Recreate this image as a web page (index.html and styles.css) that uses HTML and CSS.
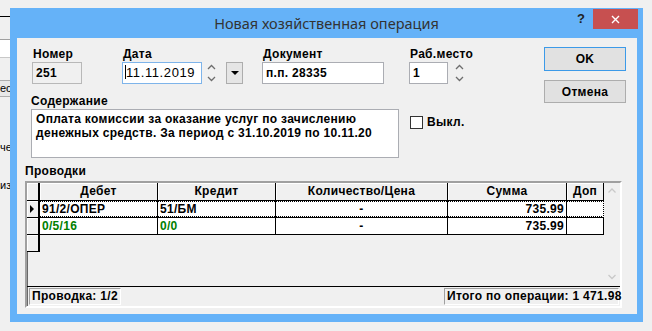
FILE: index.html
```html
<!DOCTYPE html>
<html lang="ru">
<head>
  <meta charset="UTF-8">
  <title>Новая хозяйственная операция</title>
  <link rel="stylesheet" href="styles.css">
</head>
<body>
  <div class="desktop">
    <!-- parent window, mostly hidden behind the dialog -->
    <div class="parent">
      <div class="parent-line"></div>
      <div class="parent-edit"></div>
      <div class="parent-btn">ес</div>
      <div class="parent-text t-che">чет</div>
      <div class="parent-text t-iz">изм</div>
    </div>

    <div class="dialog">
      <div class="titlebar">
        <div></div>
        <div class="title">Новая хозяйственная операция</div>
        <div class="caption-btns">
          <div class="help">?</div>
          <div class="close">
            <svg width="9" height="9" viewBox="0 0 9 9"><path d="M1 1 L8 8 M8 1 L1 8" stroke="#fff" stroke-width="1.4" fill="none"/></svg>
          </div>
        </div>
      </div>

      <div class="client">
        <div class="top">
          <div class="fields">
            <div class="row1">
              <div class="field f-num">
                <div class="lbl">Номер</div>
                <div class="input disabled">251</div>
              </div>
              <div class="field f-date">
                <div class="lbl">Дата</div>
                <div class="inline">
                  <div class="input focused normal"><span class="caret"></span>11.11.2019</div>
                  <div class="spin">
                    <svg width="9" height="20" viewBox="0 0 9 20"><path d="M1 6 L4.5 2.5 L8 6 M1 14 L4.5 17.5 L8 14" stroke="#6d6d6d" stroke-width="1.3" fill="none"/></svg>
                  </div>
                  <div class="drop"><span class="tri"></span></div>
                </div>
              </div>
              <div class="field f-doc">
                <div class="lbl">Документ</div>
                <div class="input">п.п. 28335</div>
              </div>
              <div class="field f-place">
                <div class="lbl">Раб.место</div>
                <div class="inline">
                  <div class="input">1</div>
                  <div class="spin">
                    <svg width="9" height="20" viewBox="0 0 9 20"><path d="M1 6 L4.5 2.5 L8 6 M1 14 L4.5 17.5 L8 14" stroke="#6d6d6d" stroke-width="1.3" fill="none"/></svg>
                  </div>
                </div>
              </div>
            </div>

            <div class="content-lbl">Содержание</div>
            <div class="content-row">
              <div class="memo">Оплата комиссии за оказание услуг по зачислению<br>денежных средств. За период с 31.10.2019 по 10.11.20</div>
              <div class="check"><span class="box"></span>Выкл.</div>
            </div>
          </div>

          <div class="buttons">
            <div class="btn default">OK</div>
            <div class="btn">Отмена</div>
          </div>
        </div>

        <div class="section-lbl">Проводки</div>
        <div class="grid-box">
          <div class="grid-main">
            <div class="grid">
              <div class="hd ind"></div>
              <div class="hd">Дебет</div>
              <div class="hd">Кредит</div>
              <div class="hd">Количество/Цена</div>
              <div class="hd">Сумма</div>
              <div class="hd">Доп</div>

              <div class="ind"><span class="arrow"></span></div>
              <div class="cell focus">91/2/ОПЕР</div>
              <div class="cell focus">51/БМ</div>
              <div class="cell focus center">-</div>
              <div class="cell focus right">735.99</div>
              <div class="cell focus last"></div>

              <div class="ind"></div>
              <div class="cell green">0/5/16</div>
              <div class="cell green">0/0</div>
              <div class="cell center">-</div>
              <div class="cell right">735.99</div>
              <div class="cell"></div>

              <div class="ind"></div>
            </div>
            <div class="vscroll">
              <svg width="16" height="14" viewBox="0 0 16 14"><path d="M4.5 8.5 L8 5 L11.5 8.5" stroke="#c9c9c9" stroke-width="1.3" fill="none"/></svg>
              <svg width="16" height="14" viewBox="0 0 16 14"><path d="M4.5 5 L8 8.5 L11.5 5" stroke="#c9c9c9" stroke-width="1.3" fill="none"/></svg>
            </div>
          </div>
          <div class="statusbar">
            <div class="panel">Проводка: 1/2</div>
            <div class="panel total">Итого по операции: 1 471.98</div>
          </div>
        </div>
      </div>
    </div>
  </div>
</body>
</html>
```

FILE: styles.css
```css
* {
  box-sizing: border-box;
}
body {
  margin: 0;
  background-color: #f0f0f0;
  font-family: "Liberation Sans", Arial, sans-serif;
  font-size: 12px;
  letter-spacing: 0.3px;
  font-weight: bold;
  color: #000;
}
.desktop {
  position: relative;
  width: 652px;
  height: 331px;
  overflow: hidden;
}

/* parent window behind */
.parent {
  width: 60px;
  font-weight: normal;
  font-size: 11px;
  letter-spacing: 0;
}
.parent-line {
  margin-top: 16px;
  height: 1px;
  background-color: #000;
}
.parent-edit {
  margin-top: 22px;
  height: 19px;
  background-color: #fff;
  border-top: 1px solid #a0a0a0;
  border-bottom: 1px solid #c8c8c8;
}
.parent-btn {
  margin-top: 22px;
  height: 17px;
  line-height: 15px;
  border: 1px solid #adadad;
  border-left: none;
  background-color: #e8e8e8;
}
.parent-text {
  line-height: 14px;
}
.t-che {
  margin-top: 43px;
}
.t-iz {
  margin-top: 24px;
}

/* dialog window */
.dialog {
  position: absolute;
  left: 10px;
  top: 8px;
  width: 633px;
  background-color: #65b2f8;
  padding-bottom: 8px;
}
.titlebar {
  height: 30px;
  display: grid;
  grid-template-columns: 1fr auto 1fr;
}
.title {
  font-family: "Noto Sans", "Open Sans", sans-serif;
  font-weight: normal;
  font-size: 14.5px;
  letter-spacing: 0;
  line-height: 30px;
  color: #333;
  white-space: nowrap;
}
.caption-btns {
  display: flex;
  justify-content: flex-end;
  align-items: flex-start;
}
.help {
  width: 20px;
  height: 20px;
  margin-top: 1px;
  margin-right: 2px;
  line-height: 20px;
  text-align: center;
  font-size: 13px;
  color: #222;
}
.close {
  width: 45px;
  height: 20px;
  margin-top: 1px;
  margin-right: 5px;
  background-color: #c75050;
  display: flex;
  align-items: center;
  justify-content: center;
}

.client {
  margin: 0 6px 0 7px;
  height: 276px;
  background-color: #f0f0f0;
  padding: 0 11px 0 8px;
}
.top {
  display: flex;
}
.fields {
  padding-left: 6px;
}
.row1 {
  display: flex;
  padding-top: 8px;
}
.lbl {
  line-height: 16px;
  padding-left: 1px;
}
.inline {
  display: flex;
  align-items: flex-start;
}
.input {
  height: 22px;
  line-height: 20px;
  padding-left: 3px;
  background-color: #fff;
  border: 1px solid #abadb3;
  white-space: nowrap;
}
.input.disabled {
  background-color: #f0f0f0;
  border-color: #b8b8b8;
}
.input.focused {
  border-color: #7eb4ea;
}
.input.normal {
  font-weight: normal;
  font-size: 13px;
  letter-spacing: 0.6px;
  padding-left: 2px;
}
.caret {
  display: inline-block;
  width: 1px;
  height: 14px;
  background-color: #000;
  vertical-align: -2px;
}
.spin {
  width: 9px;
  margin-left: 5px;
  padding-top: 1px;
}
.drop {
  width: 17px;
  height: 22px;
  margin-left: 10px;
  background-color: #e5e5e5;
  border: 1px solid #adadad;
  display: flex;
  align-items: center;
  justify-content: center;
}
.tri {
  width: 0;
  height: 0;
  border-left: 4px solid transparent;
  border-right: 4px solid transparent;
  border-top: 4px solid #000;
}
.f-num {
  margin-left: 1px;
}
.f-num .input {
  width: 50px;
}
.f-date {
  margin-left: 40px;
}
.f-date .input {
  width: 80px;
}
.f-doc {
  margin-left: 19px;
}
.f-doc .input {
  width: 122px;
}
.f-place {
  margin-left: 25px;
}
.f-place .input {
  width: 39px;
}
.f-place .spin {
  margin-left: 7px;
}

.content-lbl {
  margin-top: 8px;
  line-height: 15px;
}
.content-row {
  display: flex;
  align-items: flex-start;
}
.memo {
  width: 368px;
  height: 49px;
  background-color: #fff;
  border: 1px solid #abadb3;
  padding: 2px 4px;
  line-height: 14px;
  white-space: nowrap;
  overflow: hidden;
}
.check {
  margin-left: 11px;
  margin-top: 7px;
  display: flex;
  align-items: center;
  line-height: 13px;
}
.check .box {
  width: 13px;
  height: 13px;
  margin-right: 4px;
  background-color: #fff;
  border: 1px solid #333;
}

.buttons {
  margin-left: auto;
  padding-top: 9px;
  display: flex;
  flex-direction: column;
  gap: 9px;
}
.btn {
  width: 82px;
  height: 24px;
  line-height: 22px;
  text-align: center;
  background-color: #e1e1e1;
  border: 1px solid #adadad;
}
.btn.default {
  border-color: #3c9ae8;
}
.btn + .btn {
  height: 23px;
}

.section-lbl {
  margin-top: 4px;
  line-height: 19px;
}

/* grid */
.grid-box {
  width: 597px;
  border: 2px solid;
  border-color: #a0a0a0 #fff #fff #a0a0a0;
  box-shadow: inset 1px 1px 0 #696969;
}
.grid-main {
  display: flex;
  height: 103px;
}
.grid {
  width: 577px;
  display: grid;
  grid-template-columns: 13px 118px 118px 172px 119px 37px;
  grid-auto-rows: 17px;
  grid-template-rows: 18px;
  align-content: start;
}
.hd {
  background-color: #f0f0f0;
  border-right: 1px solid #000;
  border-bottom: 1px solid #000;
  box-shadow: inset 1px 1px 0 #fff;
  text-align: center;
  line-height: 16px;
}
.ind {
  background-color: #f0f0f0;
  border-right: 2px solid #000;
  border-bottom: 1px solid #000;
  box-shadow: inset 1px 1px 0 #fff;
  display: flex;
  align-items: center;
  padding-left: 3px;
}
.arrow {
  width: 0;
  height: 0;
  border-top: 4px solid transparent;
  border-bottom: 4px solid transparent;
  border-left: 4px solid #000;
}
.cell {
  background-color: #fff;
  border-right: 1px solid #000;
  border-bottom: 1px solid #000;
  line-height: 16px;
  padding: 0 2px;
  white-space: nowrap;
  overflow: hidden;
}
.cell.focus {
  background-image:
    repeating-linear-gradient(90deg, #000 0 1px, transparent 1px 2px),
    repeating-linear-gradient(90deg, #000 0 1px, transparent 1px 2px);
  background-size: 100% 1px;
  background-position: top, bottom;
  background-repeat: no-repeat;
}
.cell.focus.last {
  border-right: 1px dotted #000;
}
.cell.center {
  text-align: center;
}
.cell.right {
  text-align: right;
}
.cell.green {
  color: #008000;
}
.vscroll {
  width: 16px;
  background-color: #f0f0f0;
  display: flex;
  flex-direction: column;
  justify-content: space-between;
  padding: 1px 0 2px;
}
.statusbar {
  height: 20px;
  border-top: 1px solid #000;
  display: flex;
  justify-content: space-between;
  align-items: flex-start;
  padding: 1px 1px 0 2px;
}
.panel {
  height: 17px;
  line-height: 15px;
  padding: 0 2px;
  border: 1px solid;
  border-color: #a0a0a0 #fff #fff #a0a0a0;
  white-space: nowrap;
}
.panel.total {
  width: 175px;
  text-align: right;
}
```
